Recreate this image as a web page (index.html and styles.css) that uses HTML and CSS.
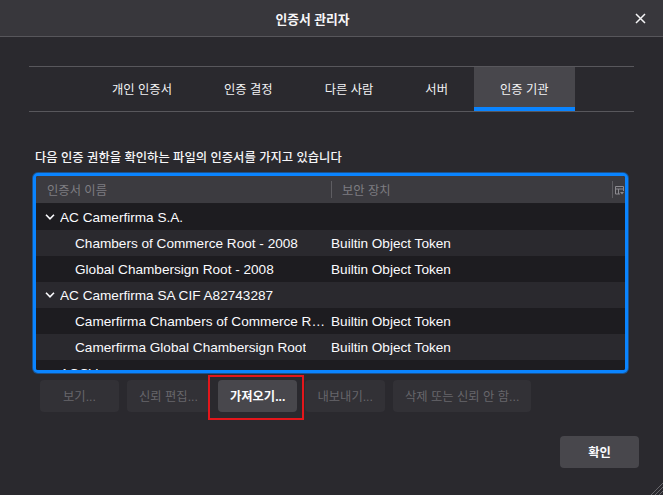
FILE: index.html
```html
<!DOCTYPE html>
<html lang="ko">
<head>
<meta charset="utf-8">
<title>인증서 관리자</title>
<link rel="stylesheet" href="styles.css">
</head>
<body>
<div class="dialog">
  <header class="titlebar">
    <span></span>
    <span class="title">인증서 관리자</span>
    <span class="close"><svg width="11" height="11" viewBox="0 0 11 11"><path d="M1 1l9 9M10 1l-9 9" stroke="#f4f4f6" stroke-width="1.5" fill="none"/></svg></span>
  </header>

  <nav class="tabs">
    <div class="tab">개인 인증서</div>
    <div class="tab">인증 결정</div>
    <div class="tab">다른 사람</div>
    <div class="tab">서버</div>
    <div class="tab active">인증 기관</div>
  </nav>

  <p class="intro">다음 인증 권한을 확인하는 파일의 인증서를 가지고 있습니다</p>

  <div class="tree">
    <div class="thead">
      <div class="hcol h1">인증서 이름</div>
      <div class="hsep"></div>
      <div class="hcol h2">보안 장치</div>
      <div class="hsep"></div>
      <div class="picker"><svg width="9" height="9" viewBox="0 0 9 9"><path d="M.5 .5h8v4.5M.5 .5v7.5h4.5M.5 3h8M3.5 3v5" stroke="#8c8b90" fill="none"/><path d="M5 6h4l-2 2.5z" fill="#8c8b90"/></svg></div>
    </div>
    <div class="tbody">
      <div class="row parent odd"><div class="c1"><svg class="chev" width="10" height="6" viewBox="0 0 10 6"><path d="M1 .8l4 4 4-4" fill="none" stroke="#fbfbfe" stroke-width="1.6"/></svg><span class="txt">AC Camerfirma S.A.</span></div><div class="c2"></div></div>
      <div class="row child"><div class="c1"><span class="txt">Chambers of Commerce Root - 2008</span></div><div class="c2">Builtin Object Token</div></div>
      <div class="row child odd"><div class="c1"><span class="txt">Global Chambersign Root - 2008</span></div><div class="c2">Builtin Object Token</div></div>
      <div class="row parent"><div class="c1"><svg class="chev" width="10" height="6" viewBox="0 0 10 6"><path d="M1 .8l4 4 4-4" fill="none" stroke="#fbfbfe" stroke-width="1.6"/></svg><span class="txt">AC Camerfirma SA CIF A82743287</span></div><div class="c2"></div></div>
      <div class="row child odd"><div class="c1"><span class="txt">Camerfirma Chambers of Commerce Root</span></div><div class="c2">Builtin Object Token</div></div>
      <div class="row child"><div class="c1"><span class="txt">Camerfirma Global Chambersign Root</span></div><div class="c2">Builtin Object Token</div></div>
      <div class="row parent odd"><div class="c1"><svg class="chev" width="10" height="6" viewBox="0 0 10 6"><path d="M1 .8l4 4 4-4" fill="none" stroke="#fbfbfe" stroke-width="1.6"/></svg><span class="txt">ACCV</span></div><div class="c2"></div></div>
    </div>
  </div>

  <div class="actions">
    <button class="btn" disabled>보기...</button>
    <button class="btn" disabled>신뢰 편집...</button>
    <span class="highlight"><button class="btn enabled">가져오기...</button></span>
    <button class="btn" disabled>내보내기...</button>
    <button class="btn" disabled>삭제 또는 신뢰 안 함...</button>
  </div>

  <div class="footer">
    <button class="btn enabled ok">확인</button>
  </div>

  <svg class="grip" width="13" height="13" viewBox="0 0 13 13"><path d="M13 1L1 13M13 5L5 13M13 9L9 13" stroke="#66656a" stroke-width="1"/></svg>
</div>
</body>
</html>
```

FILE: styles.css
```css
html, body {
  margin: 0;
  height: 100%;
}

body {
  background: #2a292e;
  font-family: "Liberation Sans", "Noto Sans CJK KR", sans-serif;
  font-size: 12.3px;
  color: #fbfbfe;
  overflow: hidden;
}

.dialog {
  position: relative;
  height: 100%;
  display: flex;
  flex-direction: column;
}

.titlebar {
  height: 36px;
  flex: none;
  background: #38373c;
  border-bottom: 1px solid #57565b;
  display: grid;
  grid-template-columns: 1fr auto 1fr;
  align-items: center;
}

.title {
  font-weight: 700;
  font-size: 12.8px;
  color: #f6f6f8;
  padding-right: 38px;
}

.close {
  justify-self: end;
  padding-right: 17px;
  display: flex;
  align-items: center;
}

.tabs {
  margin: 29px 29px 0 29px;
  border-top: 1px solid #58575c;
  border-bottom: 1px solid #58575c;
  display: flex;
  padding-left: 57px;
}

.tab {
  height: 44px;
  padding: 0 26px;
  display: flex;
  align-items: center;
  color: #f2f2f4;
}

.tab.active {
  background: #48474c;
  box-shadow: inset 0 -4px 0 #0a84ff;
}

.intro {
  margin: 38px 0 0 35px;
  line-height: 16px;
  font-weight: 500;
  color: #f6f6f8;
}

.tree {
  margin: 7px 0 0 33px;
  width: 589px;
  height: 194px;
  border: 3px solid #0a84ff;
  border-radius: 5px;
  box-shadow: 0 0 0 1px rgba(10, 132, 255, 0.45);
  overflow: hidden;
  display: flex;
  flex-direction: column;
  background: #1e1d21;
}

.thead {
  flex: none;
  height: 27px;
  background: #3c3b40;
  display: flex;
  align-items: center;
  color: #7e7d82;
}

.hcol {
  white-space: nowrap;
}

.h1 {
  width: 284px;
  padding-left: 11px;
}

.h2 {
  flex: 1;
  padding-left: 10px;
}

.hsep {
  width: 1px;
  height: 17px;
  background: #5e5d62;
}

.picker {
  width: 12px;
  display: flex;
  justify-content: center;
  padding-top: 2px;
}

.tbody {
  flex: 1;
  overflow: hidden;
  font-size: 13.6px;
  padding-top: 1px;
}

.row {
  height: 26px;
  display: flex;
  align-items: center;
  background: #2a292e;
}

.row.odd {
  background: #1d1c20;
}

.c1 {
  width: 294px;
  flex: none;
  display: flex;
  align-items: center;
  white-space: nowrap;
  overflow: hidden;
}

.c1 .txt {
  overflow: hidden;
  text-overflow: ellipsis;
}

.row.parent .c1 {
  padding-left: 9px;
  width: 285px;
}

.row.child .c1 {
  padding-left: 39px;
  width: 255px;
  padding-right: 0;
}

.chev {
  margin-right: 5px;
  flex: none;
}

.c2 {
  padding-left: 1px;
  white-space: nowrap;
}

.actions {
  margin: 7px 0 0 40px;
  display: flex;
  gap: 8px;
}

.btn {
  font-family: "Liberation Sans", "Noto Sans CJK KR", sans-serif;
  font-size: 12.3px;
  height: 32px;
  min-width: 79px;
  padding: 0 12px;
  border: none;
  border-radius: 4px;
  background: #323136;
  color: #67666b;
}

.btn.enabled {
  background: #48474c;
  color: #fbfbfe;
  font-weight: 700;
}

.highlight {
  position: relative;
  display: flex;
}

.highlight::after {
  content: "";
  position: absolute;
  left: -10px;
  right: -7px;
  top: -5px;
  bottom: -8px;
  border: 2px solid #e3161b;
  pointer-events: none;
}

.footer {
  margin: 24px 24px 0 0;
  display: flex;
  justify-content: flex-end;
}

.ok {
  min-width: 79px;
}

.grip {
  position: absolute;
  right: 0;
  bottom: 0;
}
```
